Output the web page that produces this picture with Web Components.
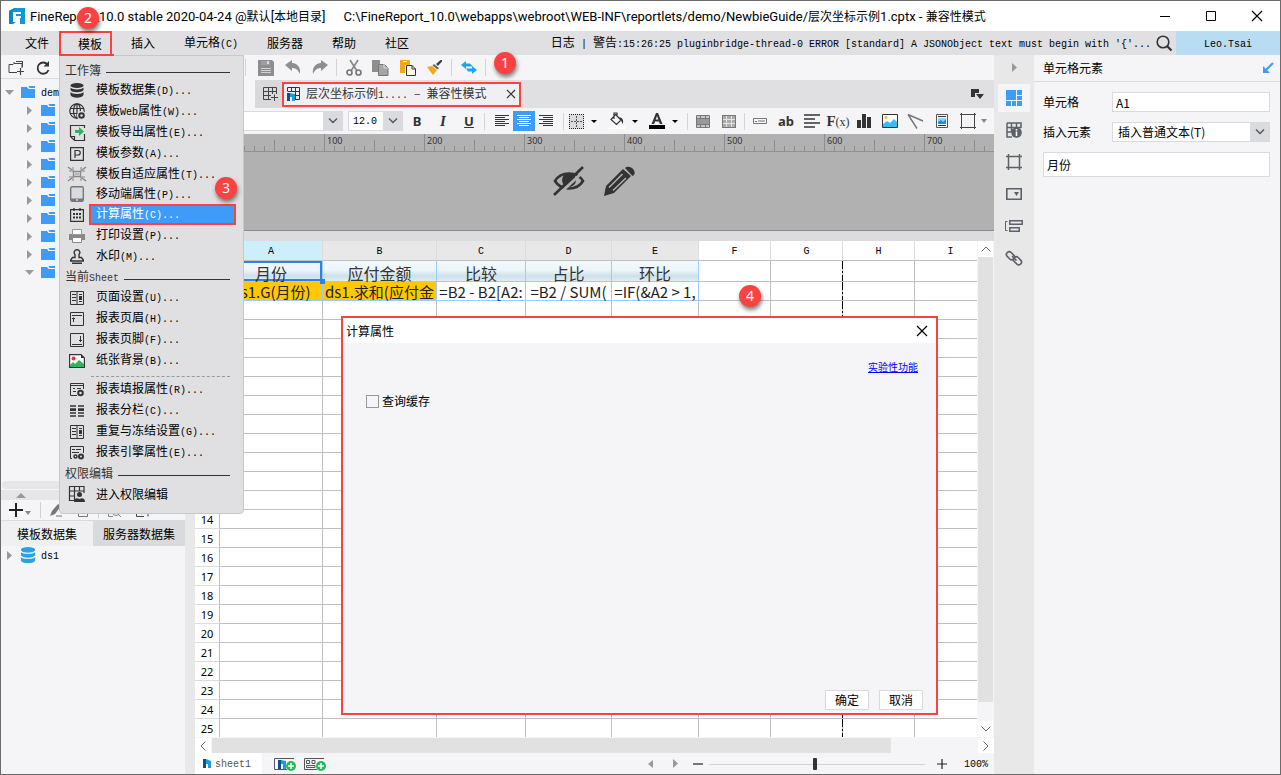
<!DOCTYPE html>
<html lang="zh-CN">
<head>
<meta charset="utf-8">
<title>FineReport</title>
<style>
  html, body {
    margin: 0;
    height: 100%;
  }

  body {
    font-family: "Noto Sans CJK SC", sans-serif;
    font-size: 12px;
    line-height: 16px;
    color: #000;
    overflow: hidden;
  }
</style>
</head>
<body>
<report-designer></report-designer>

<script>
// name: [width, height, svg content]
const ICONS = {
  logo: [16, 16, '<path d="M0 3 5 0H16V16H11V10H7V14L4 16H0Z" fill="#1296db"/><path d="M4 4H12V6H7V8H12V10H7V14H4Z" fill="#fff"/><path d="M0 3 4 1V16H0Z" fill="#0f86cf"/>'],
  miniLogo: [8, 9, '<path d="M0 0H3V9H0Z" fill="#0b4f8f"/><path d="M3 0 8 2V9H5V5H3Z" fill="#1e9be0"/>'],
  minimize: [10, 10, '<path d="M0 5.500H10" stroke="#000"/>'],
  maximize: [10, 10, '<path d="M.5.5H9.500V9.500H.5Z" stroke="#000" fill="none"/>'],
  close: [10, 10, '<path d="M0 0 10 10M10 0 0 10" stroke="#000" stroke-width="1.200"/>'],
  closeTab: [8, 8, '<path d="M0 0 8 8M8 0 0 8" stroke="#333" stroke-width="1.200"/>'],
  search: [16, 16, '<circle cx="7" cy="7" r="5.800" fill="none" stroke="#333" stroke-width="1.600"/><path d="M11 11 15.500 15.500" stroke="#333" stroke-width="2.200"/>'],
  newFolder: [16, 14, '<path d="M9 11.500H1V3.500H5L6 2.500H14V7M6 2.500V1M8 .5H15M14.500.5V6" fill="none" stroke="#444"/><path d="M12.500 7V14M9 10.500H16" stroke="#444" stroke-width="1.200"/>'],
  refresh: [14, 14, '<path d="M11.500 3.500A5.600 5.600 0 1 0 12.500 9" fill="none" stroke="#333" stroke-width="1.800"/><path d="M13 0V5.500H7.500Z" fill="#333"/>'],
  save: [16, 16, '<path d="M0 0H14L16 2V16H0Z" fill="#8e8e8e"/><path d="M3 1H12V5H3Z" fill="#a0a0a0"/><path d="M9 1H11V4H9Z" fill="#d8d8da"/><path d="M3 8.500H13M3 10.500H13M3 12.500H13" stroke="#d0d0d2"/>'],
  undo: [16, 15, '<path d="M0 5 7 0V3C12 3 16 7 15 14 13 10 11 8 7 8V11Z" fill="#8e8e8e"/>'],
  redo: [16, 15, '<path d="M16 5 9 0V3C4 3 0 7 1 14 3 10 5 8 9 8V11Z" fill="#8e8e8e"/>'],
  cut: [16, 16, '<path d="M4 0 11 11M12 0 5 11" stroke="#888" stroke-width="1.700"/><circle cx="3.500" cy="12.500" r="2.500" fill="none" stroke="#777" stroke-width="1.700"/><circle cx="12.500" cy="12.500" r="2.500" fill="none" stroke="#777" stroke-width="1.700"/>'],
  copy: [17, 16, '<path d="M0 0H8V12H0Z" fill="#8e8e8e"/><path d="M6.500 4.500H12.500L16 8V15.500H6.500Z" fill="#a5a5a5" stroke="#777"/><path d="M12 4V8H16" fill="none" stroke="#ddd"/>'],
  paste: [16, 16, '<path d="M0 0H10V5H5V13H0Z" fill="#f0a818"/><path d="M3 1H7V2H3Z" fill="#fff"/><path d="M6.500 5.500H12L15.500 9V15.500H6.500Z" fill="#fff8ea" stroke="#333"/><path d="M12 5.500V9H15.500" fill="none" stroke="#333"/>'],
  brush: [16, 15, '<path d="M9 4 13.500 0H15V1.500L11 6Z" fill="#444"/><path d="M7 4 12 8 10.500 9.500 5.500 5.500Z" fill="#666"/><path d="M0 7 5 6 10 10 6 15Z" fill="#f0a818"/>'],
  swap: [16, 13, '<path d="M0 4 5 0V2.500H9L12 5.500H5V8Z" fill="#1fa5e8"/><path d="M16 9 11 5V7.500H5L7 10.500H11V13Z" fill="#1fa5e8"/>'],
  newTab: [15, 14, '<path d="M13.500 7V.5H.5V12.500H8M.5 4.500H13.500M.5 8.500H8M5.500.5V12.500M9.500.5V7" fill="none" stroke="#444"/><path d="M11.500 7.500V14M8 10.500H15" stroke="#444"/>'],
  report: [13, 14, '<path d="M.5 4V.5H12.500V12.500H8M.5 4.500H12.500M8 8.500H12.500M4.500.5V4M8.500.5V12" fill="none" stroke="#333"/><path d="M0 6H3V14H0Z" fill="#0b4f8f"/><path d="M3 6 8 7V14H5V10H3Z" fill="#1e9be0"/>'],
  tabList: [13, 10, '<path d="M0 0H8V4H4V8H0Z" fill="#333"/><path d="M5 5H13L9 10Z" fill="#333"/>'],
  chevron: [10, 6, '<path d="M1 .5 5 4.500 9 .5" fill="none" stroke="#555" stroke-width="1.400"/>'],
  up: [10, 6, '<path d="M.5 5.500 5 1 9.500 5.500" fill="none" stroke="#666"/>'],
  down: [10, 6, '<path d="M.5.5 5 5 9.500.5" fill="none" stroke="#666"/>'],
  left: [6, 10, '<path d="M5.500.5 1 5 5.500 9.500" fill="none" stroke="#666"/>'],
  right: [6, 10, '<path d="M.5.5 5 5 .5 9.500" fill="none" stroke="#666"/>'],
  caret: [6, 3, '<path d="M0 0H6L3 3Z" fill="#000"/>'],
  caretGray: [6, 4, '<path d="M0 0H6L3 4Z" fill="#888"/>'],
  triRight: [5, 9, '<path d="M0 0 5 4.500 0 9Z" fill="#999"/>'],
  triLeft: [5, 8, '<path d="M5 0 0 4 5 8Z" fill="#999"/>'],
  triDown: [9, 5, '<path d="M0 0H9L4.500 5Z" fill="#999"/>'],
  triUp: [10, 5, '<path d="M0 5H10L5 0Z" fill="#999"/>'],
  folder: [14, 12, '<path d="M0 1H6L7.500 3H14V12H0Z" fill="#409bf7"/><path d="M7.500 0H14V2H8.500Z" fill="#409bf7"/>'],
  alignLeft: [14, 12, '<path d="M0 .5H14M0 2.500H10M0 4.500H14M0 6.500H10M0 8.500H14M0 10.500H10" stroke="#333"/>'],
  alignCenter: [15, 12, '<path d="M0 .5H14M2 2.500H12M0 4.500H14M2 6.500H12M0 8.500H14M2 10.500H12" stroke="#fff"/>'],
  alignRight: [14, 12, '<path d="M0 .5H14M4 2.500H14M0 4.500H14M4 6.500H14M0 8.500H14M4 10.500H14" stroke="#333"/>'],
  border: [15, 15, '<path d="M0 0H15V15H0Z" fill="#dcdcdf"/><path d="M0 .5H15M0 14.500H15M.5 0V15M14.500 0V15" stroke="#222" stroke-dasharray="1 1"/><path d="M2 7.500H14M7.500 2V14" stroke="#555" stroke-dasharray="2 1"/>'],
  bucket: [16, 16, '<path d="M6.500 1.500 12 7 7.500 11.500 2 6.500ZM5 6V0H8V4" fill="none" stroke="#333" stroke-width="1.200"/><path d="M10 4C14 5 15 8 13.500 11L12 7Z" fill="#333"/><path d="M0 13H16V16H0Z" fill="#fff"/>'],
  fontColor: [16, 16, '<path d="M2.500 11 7 0H9L13.500 11H10.800L10 8.500H6L5.200 11ZM6.700 6.500H9.300L8 3Z" fill="#333" fill-rule="evenodd"/><path d="M0 12H16V16H0Z" fill="#000"/>'],
  merge: [14, 13, '<path d="M.5.5H13.500V12.500H.5Z" fill="#c6c6c8" stroke="#777"/><path d="M0 3.500H14M0 9.500H14M4.500.5V3M9.500.5V3M4.500 10V13M9.500 10V13" stroke="#777"/><path d="M1 4H13V9H1Z" fill="#999"/>'],
  unmerge: [14, 13, '<path d="M.5.5H13.500V12.500H.5Z" fill="#aaa" stroke="#777"/><path d="M0 4.500H14M0 8.500H14M4.500 0V13M9.500 0V13" stroke="#e4e4e4"/><path d="M.5.5H13.500V12.500H.5Z" fill="none" stroke="#777"/>'],
  textBox: [14, 6, '<path d="M.5.5H13.500V5.500H.5Z" fill="none" stroke="#777"/><path d="M2 3.500H4M5 3H12" stroke="#777"/>'],
  lines: [16, 14, '<path d="M0 1H16M0 5H11M0 9H16M0 13H11" stroke="#333" stroke-width="1.600"/>'],
  chart: [14, 14, '<path d="M0 6H4V14H0ZM5 0H9V14H5ZM10 3H14V14H10Z" fill="#333"/>'],
  image: [16, 14, '<path d="M.5.5H15.500V13.500H.5Z" fill="#fff" stroke="#333"/><path d="M1 10 5 7 8 9 12 5 15 8V13H1Z" fill="#38bdf8"/><circle cx="4" cy="3.500" r="1.500" fill="#f5b830"/>'],
  slope: [16, 15, '<path d="M0 .5 15 7M0 .5 9 14.500" stroke="#777" stroke-width="1.400" fill="none"/>'],
  docImage: [12, 14, '<path d="M.5.5H11.500V13.500H.5Z" fill="#fff" stroke="#555"/><path d="M2 2.500H10M2 11.500H10" stroke="#333"/><path d="M2 4H10V10H2Z" fill="#1a8fe0"/><path d="M2 8 5 6 7 8 10 5V4H2Z" fill="#8fd0fa"/>'],
  frame: [16, 16, '<path d="M1.500 0V16M14.500 0V16M0 1.500H16M0 14.500H16" stroke="#444" fill="none"/>'],
  frameBold: [16, 16, '<path d="M2.500 0V16M13.500 0V16M0 2.500H16M0 13.500H16" stroke="#5b6069" stroke-width="1.500" fill="none"/>'],
  tiles: [16, 16, '<path d="M0 0H10V10H0ZM11 0H16V5H11ZM11 6H16V10H11ZM0 11H5V16H0ZM6 11H10V16H6ZM11 11H16V16H11Z" fill="#409bf7"/>'],
  tableInfo: [16, 16, '<path d="M1 1H15V6M1 1V15H6M1 5.500H15M1 10H5M5.500 1V10M10.500 1V5" fill="none" stroke="#5b6069" stroke-width="1.500"/><circle cx="10.500" cy="10.500" r="5.300" fill="#5b6069"/><path d="M10.500 7V8.500M10.500 9.500V14" stroke="#fff" stroke-width="1.600"/>'],
  widget: [16, 12, '<path d="M.8.8H15.200V11.200H.8Z" fill="none" stroke="#5b6069" stroke-width="1.600"/><path d="M8 4H13L10.500 8Z" fill="#5b6069"/>'],
  layers: [18, 12, '<path d="M2.500 1.500H.5V10.500H2.500" fill="none" stroke="#5b6069"/><path d="M4.800.8H17.200V4.200H4.800ZM4.800 7.800H14.200V11.200H4.800Z" fill="none" stroke="#5b6069" stroke-width="1.500"/>'],
  link: [16, 16, '<g fill="none" stroke="#5b6069" stroke-width="1.600"><rect x="0" y="3" width="9" height="5.500" rx="2.700" transform="rotate(45 4.500 5.700)"/><rect x="7" y="8" width="9" height="5.500" rx="2.700" transform="rotate(45 11.500 10.700)"/><path d="M6 6 10.500 10.500"/></g>'],
  popIn: [12, 12, '<path d="M11 1 4 8" stroke="#409bf7" stroke-width="2"/><path d="M1 4V11H8Z" fill="#409bf7"/>'],
  eyeOff: [32, 30, '<path d="M2 15C8 5 24 5 30 15 24 25 8 25 2 15Z" fill="none" stroke="#333" stroke-width="2.600"/><circle cx="16" cy="14" r="7" fill="#333"/><path d="M3 31 33 3" stroke="#b1b1b1" stroke-width="3"/><path d="M1 29 30 1" stroke="#333" stroke-width="2.600"/>'],
  pencil: [32, 30, '<path d="M0 30 2 20 19 3 27 10 10 27Z" fill="#333"/><path d="M21 2C25-2 33 4 30 9L28.500 10Z" fill="#333"/><path d="M5 21.500 18.500 8M9 24.500 22 12" stroke="#b1b1b1" stroke-width="1.500"/>'],
  plus: [14, 14, '<path d="M7 0V14M0 7H14" stroke="#222" stroke-width="2"/>'],
  plusThin: [10, 10, '<path d="M5 0V10M0 5H10" stroke="#222" stroke-width="1.200"/>'],
  minusThin: [10, 10, '<path d="M0 5H10" stroke="#222" stroke-width="1.200"/>'],
  edit: [13, 14, '<path d="M0 13 2 8 8 1 11 3 5 11Z" fill="#777"/><path d="M6 13H12" stroke="#777"/>'],
  trash: [12, 14, '<path d="M1.500 3V13.500H10.500V3M0 2.500H12" fill="none" stroke="#777"/>'],
  preview: [14, 14, '<path d="M.5.500H12.500M.5 0V13.500H5" fill="none" stroke="#888"/><circle cx="8" cy="9" r="3.500" fill="none" stroke="#888"/><path d="M10 11 13 14" stroke="#888"/>'],
  tools: [15, 14, '<path d="M.5 0V13.500H8M12 4V13.500" fill="none" stroke="#444"/><path d="M5 11 8 6 11 9" fill="none" stroke="#444" stroke-width="1.500"/>'],
  dbBlue: [14, 16, '<path d="M0 2.500V13.500C0 17 14 17 14 13.500V2.500Z" fill="#27a3e2"/><ellipse cx="7" cy="2.700" rx="7" ry="2.700" fill="#27a3e2"/><path d="M0 4C1 7 13 7 14 4M0 9C1 12 13 12 14 9" fill="none" stroke="#fff" stroke-width="1.200"/>'],
  db: [14, 15, '<ellipse cx="7" cy="2.500" rx="6.500" ry="2.500" fill="#333"/><path d="M.5 4.500C2 7 12 7 13.500 4.500V7C12 10 2 10 .5 7ZM.5 9C2 11.500 12 11.500 13.500 9V12C12 15.500 2 15.500.5 12Z" fill="#333"/>'],
  globe: [17, 17, '<g fill="none" stroke="#333" stroke-width="1.200"><circle cx="8" cy="8" r="7.200"/><ellipse cx="8" cy="8" rx="3.500" ry="7.200"/><path d="M1 5.500H15M1 10.500H9M8 1V15"/></g><circle cx="12.500" cy="12.500" r="4.500" fill="#e0e0e3"/><circle cx="12.500" cy="12.500" r="2.300" fill="none" stroke="#333" stroke-width="2"/>'],
  exportDoc: [15, 16, '<path d="M14.500 9V15.500H4.500L.5 11.500V.5H14.500V3M.5 11.500H4.500V15.500" fill="none" stroke="#333" stroke-width="1.200"/><path d="M5 5H9V2L14 6.500 9 11V8H5Z" fill="#2fb457"/>'],
  param: [14, 14, '<path d="M.6.6H13.400V13.400H.6Z" fill="none" stroke="#333" stroke-width="1.200"/><path d="M5 11V3.500H8A2 2 0 0 1 8 8H5" fill="none" stroke="#333" stroke-width="1.200"/>'],
  adaptive: [18, 14, '<path d="M5.500 4.500H12.500V9.500H5.500Z" fill="none" stroke="#888" stroke-width="1.400"/><path d="M7 7H11" stroke="#888"/><path d="M0 0 4 3M18 0 14 3M0 14 4 11M18 14 14 11" stroke="#888" stroke-width="1.500"/><path d="M1 4H5V0M17 4H13V0M1 10H5V14M17 10H13V14" fill="none" stroke="#888"/>'],
  mobile: [14, 16, '<rect x=".7" y=".7" width="12.600" height="14.600" rx="1.500" fill="#d5dbe1" stroke="#777" stroke-width="1.400"/><path d="M1 12.500H13V15H1Z" fill="#777"/><path d="M6 14H8" stroke="#fff"/>'],
  calendar: [14, 14, '<path d="M.6 1.600H13.400V13.400H.6Z" fill="none" stroke="#333" stroke-width="1.200"/><path d="M4 0V3M10 0V3" stroke="#333" stroke-width="1.400"/><path d="M3 6H11M3 9.500H11" stroke="#333" stroke-width="2" stroke-dasharray="2 1"/>'],
  printer: [16, 14, '<path d="M0 5H16V11H0Z" fill="#888"/><path d="M3.500.5H12.500V5.500H3.500Z" fill="#fff" stroke="#999"/><path d="M3.500 8.500H12.500V13.500H3.500Z" fill="#fff" stroke="#888"/>'],
  stamp: [14, 15, '<path d="M7 .7A2.800 2.800 0 0 1 9 5.500L9 8.500H11.500L13.300 11V12H.7V11L2.500 8.500H5V5.500A2.800 2.800 0 0 1 7 .7ZM2 14.300H12" fill="none" stroke="#333" stroke-width="1.400"/>'],
  page: [14, 14, '<path d="M.5.5H13.500V13.500H.5ZM7 .5V13.500M2 3.500H6M2 6.500H6M2 9.500H6M9 3.500H12M9 10.500H12" fill="none" stroke="#333"/><path d="M9 5H12V9H9Z" fill="#333"/>'],
  header: [14, 14, '<path d="M.5.5H13.500V13.500H.5ZM2 3.500H12M3.500 5.500V10M2 6.500H5" fill="none" stroke="#333"/>'],
  footer: [14, 14, '<path d="M.5.5H13.500V13.500H.5ZM2 11.500H12M10.500 3V9M9 7.500H12" fill="none" stroke="#333"/>'],
  paper: [16, 14, '<path d="M.6.6H12L15.400 4V13.400H.6Z" fill="#fff" stroke="#333" stroke-width="1.200"/><path d="M1 13V11L4 8 6 10 10 6 15 10V13Z" fill="#2fb457"/><circle cx="4.500" cy="4.500" r="2" fill="#e33"/><path d="M12 .6V4H15.400Z" fill="#333"/>'],
  fill: [15, 14, '<path d="M13.500 6V.5H.5V12.500H7M.5 2.500H13.500M3 5.500H5M7 5.500H11M3 8.500H6" fill="none" stroke="#333"/><circle cx="10.500" cy="10" r="2.300" fill="none" stroke="#333" stroke-width="2"/>'],
  columns: [14, 12, '<path d="M0 1H6M0 4H6M0 8H6M0 11H6M8 1H14M8 4H14M8 8H14M8 11H14" stroke="#333" stroke-width="1.300"/><path d="M0 4H6V6H0ZM8 4H14V6H8Z" fill="#333"/>'],
  engine: [15, 14, '<path d="M13.500 7V.5H.5V12.500H2M2 3.500H5M6 3.500H11M2 6.500H9" fill="none" stroke="#333"/><circle cx="5.500" cy="10.500" r="1.500" fill="none" stroke="#333" stroke-width="1.500"/><circle cx="11" cy="10.500" r="2" fill="none" stroke="#333" stroke-width="2"/>'],
  auth: [16, 16, '<path d="M15 7V.5H.5V14.500H5M.5 5H15M.5 10H6M5.500.5V15M10.500.5V5" fill="none" stroke="#333" stroke-width="1.200"/><circle cx="10.500" cy="8.500" r="2.500" fill="#333"/><path d="M5 16C5 12 8 11.500 10.500 13 13 11.500 16 12 16 16Z" fill="#333"/>'],
  addSheet: [22, 14, '<path d="M20 1.500H.5V12.500H13" fill="none" stroke="#555"/><path d="M4 3H7V12H4Z" fill="#0b4f8f"/><path d="M7 3 12 4V12H9V7H7Z" fill="#1e9be0"/><circle cx="17" cy="9" r="5" fill="#1fbf55"/><path d="M17 6V12M14 9H20" stroke="#fff" stroke-width="1.500"/>'],
  addForm: [22, 14, '<path d="M20 1.500H.5V12.500H13M2.500 3.500H5.500V6.500H2.500ZM8 3.500H11V6.500H8ZM2.500 8.500H11V10.500H2.500Z" fill="none" stroke="#555"/><circle cx="17" cy="9" r="5" fill="#1fbf55"/><path d="M17 6V12M14 9H20" stroke="#fff" stroke-width="1.500"/>']
};

// latin runs are set in a smaller monospace so that two letters take one ideograph
function mix(text) {
  return text.replace(/[\x20-\x7e]+/g, '<span class="lat">$&</span>');
}

function icon(name) {
  return `<fr-icon name="${name}"></fr-icon>`;
}

const BASE = /*css*/`
  * {
    box-sizing: border-box;
  }

  button, input, select {
    margin: 0;
    font: inherit;
    color: inherit;
  }

  button {
    display: flex;
    align-items: center;
    justify-content: center;
    padding: 0;
    border: 0;
    background: none;
    white-space: nowrap;
  }

  .lat {
    font-family: "Liberation Mono", monospace;
    font-size: 10px;
    white-space: pre;
  }
`;

class FrIcon extends HTMLElement {

  constructor() {
    super();
    this.attachShadow({ mode: 'open' });
  }

  connectedCallback() {
    const [w, h, body] = ICONS[this.getAttribute('name')];
    this.shadowRoot.innerHTML = /*html*/`
      <style>
        :host { display: inline-flex; flex: none; }
        svg { display: block; overflow: visible; }
      </style>
      <svg width="${w}" height="${h}" viewBox="0 0 ${w} ${h}" aria-hidden="true">${body}</svg>
    `;
  }

}

customElements.define('fr-icon', FrIcon);

// common part of all the panels
class FrPanel extends HTMLElement {

  constructor() {
    super();
    this.attachShadow({ mode: 'open' });
  }

  connectedCallback() {
    this.shadowRoot.innerHTML = `<style>${BASE}${this.constructor.styles}</style>${this.markup()}`;
  }

}

class StepBadge extends FrPanel {

  static get styles() {
    return /*css*/`
      :host {
        display: flex;
        align-items: center;
        justify-content: center;
        width: 22px;
        height: 22px;
        border-radius: 50%;
        background: #fa4242;
        box-shadow: 1px 3px 4px rgba(0, 0, 0, .5);
        color: #fff;
        font: 14px/22px "Noto Sans", sans-serif;
      }
    `;
  }

  markup() {
    return '<slot></slot>';
  }

}

customElements.define('step-badge', StepBadge);

class TitleBar extends FrPanel {

  static get styles() {
    return /*css*/`
      :host {
        display: flex;
        align-items: center;
        height: 30px;
        flex: none;
        padding: 0 18px 0 8px;
        background: #fff;
      }

      .name {
        margin: 0 18px 0 5px;
      }

      .lat {
        font-family: Roboto, sans-serif;
        font-size: 13px;
      }

      .buttons {
        display: flex;
        gap: 36px;
        margin-left: auto;
      }
    `;
  }

  markup() {
    return /*html*/`
      ${icon('logo')}
      <span class="name">${mix('FineReport_10.0 stable 2020-04-24 @默认[本地目录]')}</span>
      <span>${mix('C:\\FineReport_10.0\\webapps\\webroot\\WEB-INF\\reportlets/demo/NewbieGuide/层次坐标示例1.cptx - 兼容性模式')}</span>
      <div class="buttons">
        <button aria-label="最小化">${icon('minimize')}</button>
        <button aria-label="最大化">${icon('maximize')}</button>
        <button aria-label="关闭">${icon('close')}</button>
      </div>
    `;
  }

}

customElements.define('title-bar', TitleBar);

class MenuBar extends FrPanel {

  static get styles() {
    return /*css*/`
      :host {
        display: flex;
        align-items: stretch;
        height: 24px;
        flex: none;
        background: #e0e0e3;
      }

      nav {
        display: flex;
        padding-left: 5px;
      }

      nav button {
        padding: 0 10px 0 19px;
      }

      nav .open {
        border: solid #fa4242;
        border-width: 2px 2px 0;
        padding: 0 8px 0 17px;
      }

      .log {
        margin-left: auto;
        align-self: center;
        white-space: nowrap;
      }

      .search {
        width: 25px;
      }

      .user {
        width: 104px;
        background: #b8dcf2;
      }
    `;
  }

  markup() {
    const items = ['文件', '模板', '插入', '单元格(C)', '服务器', '帮助', '社区'];
    return /*html*/`
      <nav>${items.map(t => `<button${t === '模板' ? ' class="open"' : ''}><span>${mix(t)}</span></button>`).join('')}</nav>
      <span class="log">${mix("日志 | 警告:15:26:25 pluginbridge-thread-0 ERROR [standard] A JSONObject text must begin with '{'...")}</span>
      <button class="search" aria-label="搜索">${icon('search')}</button>
      <button class="user"><span>${mix('Leo.Tsai')}</span></button>
    `;
  }

}

customElements.define('menu-bar', MenuBar);

class TemplateMenu extends FrPanel {

  static get styles() {
    return /*css*/`
      :host {
        display: block;
        width: 185px;
        padding: 4px 7px 9px 5px;
        background: #e0e0e3;
        border: 1px solid #c8c8cb;
        border-radius: 0 0 4px 4px;
      }

      .title {
        display: flex;
        align-items: center;
        gap: 5px;
        height: 20px;
        padding-right: 6px;
        color: #333;
      }

      .title::after {
        content: "";
        flex: 1;
        height: 1px;
        margin-top: 4px;
        background: #333;
      }

      button {
        width: 100%;
        height: 21px;
        justify-content: flex-start;
      }

      button.low {
        height: 20px;
      }

      .pic {
        display: flex;
        justify-content: center;
        width: 24px;
        flex: none;
      }

      .text {
        flex: 1;
        display: flex;
        align-items: center;
        align-self: stretch;
        padding-left: 7px;
      }

      .on .text {
        background: #409bf7;
        color: #fff;
        border: 2px solid #fa4242;
        padding-left: 5px;
      }

      hr {
        height: 1px;
        margin: 5px 6px 2px 26px;
        border: 0;
        border-top: 1px dashed #999;
      }
    `;
  }

  markup() {
    const item = (name, text, cls = '') => `
      <button class="${cls}"><span class="pic">${icon(name)}</span><span class="text"><span>${mix(text)}</span></span></button>`;
    return /*html*/`
      <div class="title"><span>工作簿</span></div>
      ${item('db', '模板数据集(D)...')}
      ${item('globe', '模板Web属性(W)...')}
      ${item('exportDoc', '模板导出属性(E)...')}
      ${item('param', '模板参数(A)...')}
      ${item('adaptive', '模板自适应属性(T)...', 'low')}
      ${item('mobile', '移动端属性(P)...', 'low')}
      ${item('calendar', '计算属性(C)...', 'on')}
      ${item('printer', '打印设置(P)...')}
      ${item('stamp', '水印(M)...')}
      <div class="title"><span>${mix('当前Sheet')}</span></div>
      ${item('page', '页面设置(U)...')}
      ${item('header', '报表页眉(H)...')}
      ${item('footer', '报表页脚(F)...')}
      ${item('paper', '纸张背景(B)...')}
      <hr>
      ${item('fill', '报表填报属性(R)...')}
      ${item('columns', '报表分栏(C)...')}
      ${item('page', '重复与冻结设置(G)...')}
      ${item('engine', '报表引擎属性(E)...')}
      <div class="title"><span>权限编辑</span></div>
      ${item('auth', '进入权限编辑')}
    `;
  }

}

customElements.define('template-menu', TemplateMenu);

class FilePanel extends FrPanel {

  static get styles() {
    return /*css*/`
      :host {
        display: flex;
        flex-direction: column;
        width: 184px;
        flex: none;
        background: #f5f5f8;
      }

      .bar {
        display: flex;
        align-items: center;
        gap: 12px;
        height: 24px;
        flex: none;
        padding: 2px 7px 0;
        border-bottom: 1px solid #dadade;
      }

      .tree {
        height: 402px;
        flex: none;
        padding-top: 4px;
      }

      .row {
        display: flex;
        align-items: center;
        height: 18px;
        padding-left: 4px;
      }

      .row .arrow {
        display: flex;
        justify-content: center;
        width: 9px;
        margin-right: 7px;
      }

      .row .label {
        margin-left: 6px;
      }

      .sub {
        padding-left: 24px;
      }

      .scroll {
        height: 8px;
        flex: none;
        margin-left: 1px;
        border-radius: 4px;
        background: #e6e6e6;
      }

      .fold {
        display: flex;
        align-items: center;
        height: 10px;
        flex: none;
        margin-top: 1px;
        padding-left: 15px;
        background: #e6e6e8;
      }

      .tools {
        gap: 0;
        height: 21px;
        padding: 0 8px;
      }

      .tools i {
        width: 1px;
        height: 16px;
        margin: 0 9px;
        background: #d0d0d4;
      }

      .tools .more {
        margin: 0 0 0 2px;
      }

      .tools .wide {
        margin-left: 14px;
      }

      .tabs {
        display: flex;
        height: 25px;
        flex: none;
      }

      .tabs button {
        flex: 1;
        background: #d9dadd;
      }

      .tabs .on {
        background: #f0f0f3;
      }
    `;
  }

  markup() {
    const sub = name => `<div class="row sub"><span class="arrow">${icon(name)}</span>${icon('folder')}</div>`;
    return /*html*/`
      <div class="bar">
        <button aria-label="新建文件夹">${icon('newFolder')}</button>
        <button aria-label="刷新">${icon('refresh')}</button>
      </div>
      <div class="tree">
        <div class="row"><span class="arrow">${icon('triDown')}</span>${icon('folder')}<span class="label">${mix('demo')}</span></div>
        ${sub('triRight').repeat(9)}
        ${sub('triDown')}
      </div>
      <div class="scroll"></div>
      <div class="fold">${icon('triUp')}</div>
      <div class="bar tools">
        <button aria-label="添加">${icon('plus')}</button>
        <span class="more">${icon('caretGray')}</span>
        <i></i>
        <button aria-label="编辑">${icon('edit')}</button>
        <button class="wide" aria-label="删除">${icon('trash')}</button>
        <i></i>
        <button aria-label="预览">${icon('preview')}</button>
        <button class="wide" aria-label="设置">${icon('tools')}</button>
      </div>
      <div class="tabs">
        <button class="on">模板数据集</button>
        <button>服务器数据集</button>
      </div>
      <div class="row"><span class="arrow">${icon('triRight')}</span>${icon('dbBlue')}<span class="label">${mix('ds1')}</span></div>
    `;
  }

}

customElements.define('file-panel', FilePanel);

class ToolBars extends FrPanel {

  static get styles() {
    return /*css*/`
      :host {
        display: block;
        flex: none;
        background: #f5f5f8;
      }

      .main, .files, .format {
        display: flex;
        align-items: center;
      }

      .main {
        height: 25px;
        padding-left: 47px;
      }

      .main button {
        width: 27px;
      }

      i {
        width: 1px;
        height: 17px;
        flex: none;
        margin: 0 3px;
        background: #d4d4d8;
      }

      .main .first {
        margin-right: 6px;
      }

      .files {
        height: 28px;
        padding-left: 60px;
      }

      .strip {
        flex: 1;
        display: flex;
        align-items: center;
        height: 28px;
        padding-right: 10px;
        background: #e0e0e3;
      }

      .strip .new {
        width: 27px;
        height: 28px;
        padding-left: 3px;
        background: #d9d9dc;
      }

      .tab {
        display: flex;
        align-items: center;
        width: 239px;
        height: 25px;
        padding: 0 4px 0 3px;
        border: 2px solid #fa4242;
        background: #f0f0f3;
        color: #333;
        white-space: nowrap;
      }

      .tab .text {
        margin-left: 6px;
      }

      .tab button {
        margin-left: auto;
      }

      .strip > :last-child {
        margin-left: auto;
      }

      .format {
        height: 26px;
        padding-left: 24px;
      }

      .combo {
        display: flex;
        height: 20px;
        border: 1px solid #dadade;
        background: #fff;
      }

      .combo input {
        width: 34px;
        border: 0;
        padding: 0 4px;
        background: none;
        font: 10px "Liberation Mono", monospace;
      }

      .combo.font input {
        width: 103px;
      }

      .combo button {
        width: 19px;
        background: #dadbde;
      }

      .size {
        margin: 0 1px 0 5px;
      }

      .format .tool {
        width: 26px;
        height: 22px;
        flex: none;
        color: #333;
      }

      .format > i {
        margin: 0 2px;
      }

      .format .letter {
        font: bold 13px "Noto Sans", sans-serif;
      }

      .format .serif {
        font: bold 15px "Liberation Serif", serif;
      }

      .serif small {
        font-size: 12px;
        font-weight: normal;
      }

      .aligns {
        display: flex;
        margin: 0 4px;
      }

      .aligns button {
        width: 22px;
        height: 20px;
      }

      .aligns .on {
        background: #409bf7;
      }

      .drops {
        display: flex;
        gap: 8px;
        margin-right: 7px;
      }

      .drops button {
        width: 32px;
        justify-content: flex-start;
        gap: 7px;
        padding-left: 3px;
      }
    `;
  }

  markup() {
    const tool = name => `<button class="tool" aria-label="${name}">${icon(name)}</button>`;
    return /*html*/`
      <div class="main">
        <i class="first"></i>
        ${['save', 'undo', 'redo'].map(tool).join('')}<i></i>
        ${['cut', 'copy', 'paste', 'brush'].map(tool).join('')}<i></i>
        ${tool('swap')}<i></i>
      </div>
      <div class="files">
        <div class="strip">
          <button class="new" aria-label="新建">${icon('newTab')}</button>
          <div class="tab">
            ${icon('report')}
            <span class="text">${mix('层次坐标示例1.... – 兼容性模式')}</span>
            <button aria-label="关闭">${icon('closeTab')}</button>
          </div>
          <button aria-label="列表">${icon('tabList')}</button>
        </div>
      </div>
      <div class="format">
        <div class="combo font"><input aria-label="字体"><button aria-label="选择字体">${icon('chevron')}</button></div>
        <div class="combo size"><input aria-label="字号" value="12.0"><button aria-label="选择字号">${icon('chevron')}</button></div>
        <button class="tool letter">B</button>
        <button class="tool serif"><em>I</em></button>
        <button class="tool letter"><u>U</u></button>
        <i></i>
        <div class="aligns">
          <button aria-label="左对齐">${icon('alignLeft')}</button>
          <button aria-label="居中" class="on">${icon('alignCenter')}</button>
          <button aria-label="右对齐">${icon('alignRight')}</button>
        </div>
        <i></i>
        <div class="drops">
          <button aria-label="边框">${icon('border')}${icon('caret')}</button>
          <button aria-label="背景">${icon('bucket')}${icon('caret')}</button>
          <button aria-label="前景">${icon('fontColor')}${icon('caret')}</button>
        </div>
        <i></i>
        ${['merge', 'unmerge'].map(tool).join('')}
        <i></i>
        ${tool('textBox')}
        <button class="tool letter">ab</button>
        ${tool('lines')}
        <button class="tool serif"><span>F<small>(x)</small></span></button>
        ${['chart', 'image', 'slope', 'docImage', 'frame'].map(tool).join('')}
        ${icon('caretGray')}
      </div>
    `;
  }

}

customElements.define('tool-bars', ToolBars);

class ParamPane extends FrPanel {

  static get styles() {
    return /*css*/`
      :host {
        display: block;
        flex: none;
        background: #b1b1b1;
        border-bottom: 1px solid #8c8c8c;
      }

      .ruler {
        display: flex;
        height: 18px;
        padding-left: 29px;
        border-bottom: 1px solid #919191;
        overflow: hidden;
      }

      .ruler span {
        width: 100px;
        flex: none;
        padding-left: 3px;
        font: 9px/13px "Noto Sans", sans-serif;
        color: #333;
        background:
          linear-gradient(#8c8c8c, #8c8c8c) 0 0 / 1px 100% no-repeat,
          linear-gradient(#8c8c8c, #8c8c8c) 50px 100% / 1px 11px no-repeat,
          linear-gradient(90deg, #8c8c8c 1px, transparent 1px) 0 100% / 10px 5px repeat-x;
      }

      .pane {
        display: flex;
        justify-content: center;
        gap: 19px;
        height: 78px;
        padding-top: 14px;
        align-items: flex-start;
      }
    `;
  }

  markup() {
    return /*html*/`
      <div class="ruler">${[0, 100, 200, 300, 400, 500, 600, 700].map(n => `<span>${n}</span>`).join('')}</div>
      <div class="pane">
        <button aria-label="隐藏">${icon('eyeOff')}</button>
        <button aria-label="编辑">${icon('pencil')}</button>
      </div>
    `;
  }

}

customElements.define('param-pane', ParamPane);

class SheetGrid extends FrPanel {

  static get styles() {
    return /*css*/`
      :host {
        display: flex;
        flex-direction: column;
        flex: 1;
        min-height: 0;
        background: #f5f5f8;
      }

      .body {
        display: flex;
        flex: 1;
        min-height: 0;
      }

      .view {
        flex: 1;
        min-width: 0;
        overflow: hidden;
        background: #fff;
      }

      table {
        width: 792px;
        table-layout: fixed;
        border-collapse: separate;
        border-spacing: 0;
      }

      th, td {
        height: 19px;
        padding: 0;
        border: solid #bfbfbf;
        border-width: 0 1px 1px 0;
        white-space: nowrap;
        line-height: 17px;
        text-align: center;
      }

      th {
        font: 12px/17px "Liberation Mono", monospace;
        border-right-color: #dcdcdf;
      }

      tbody th {
        font-family: "Noto Sans", sans-serif;
        font-size: 11px;
        border-bottom-color: #dcdcdf;
        border-right-color: #bfbfbf;
      }

      thead th {
        height: 20px;
        padding-top: 2px;
      }

      .used {
        background: #e8e8e8;
      }

      .current {
        background: #cdeefb;
      }

      .head td, .head th {
        height: 21px;
      }

      .head .v {
        padding-top: 4px;
        font-size: 16px;
        line-height: 16px;
        color: #333;
        background: linear-gradient(#f3f9fd, #edf6fb 45%, #cde1ea 75%, #e0edf3);
        border-color: #99ccff;
      }

      .data .v {
        padding-top: 2px;
        font-size: 15px;
        line-height: 16px;
        color: #222;
        border-color: #99ccff;
      }

      .data .gold {
        background: #ffc800;
      }

      .head .select {
        position: relative;
        box-shadow: inset 0 2px #2f80e8, inset -2px 0 #2f80e8, inset 0 -2px #2f80e8;
      }

      .select::after {
        content: "";
        position: absolute;
        right: -3px;
        bottom: -3px;
        width: 5px;
        height: 5px;
        background: #2f80e8;
      }

      td:nth-child(8) {
        border-right: 0;
        background: repeating-linear-gradient(#000 0 8px, #bbb 8px 10px, #000 10px 12px, #bbb 12px 14px) 100% 0 / 1px 100% no-repeat;
      }

      .vbar, .hbar {
        display: flex;
        flex: none;
      }

      .vbar {
        flex-direction: column;
        width: 17px;
        padding: 0 1px;
      }

      .vbar button {
        height: 16px;
        background: #fff;
      }

      .vbar div {
        height: 445px;
        margin-bottom: auto;
        background: #e1e1e1;
      }

      .hbar {
        height: 16px;
        padding-top: 1px;
      }

      .hbar button {
        width: 16px;
        background: #fff;
      }

      .hbar div {
        flex: 1;
        margin: 0 87px 0 1px;
        background: #e1e1e1;
      }

      .foot {
        display: flex;
        align-items: center;
        height: 21px;
        flex: none;
        padding-right: 6px;
      }

      .sheet {
        gap: 4px;
        width: 67px;
        height: 21px;
        padding-right: 3px;
        background: #fff;
        color: #555;
        margin-right: 12px;
      }

      .foot .add {
        margin-right: 8px;
      }

      .pager {
        display: flex;
        gap: 20px;
        margin: 0 15px 0 auto;
      }

      input {
        width: 216px;
        height: 14px;
        margin: 0 12px 0 6px;
        appearance: none;
        background: linear-gradient(#d4d4d8, #d4d4d8) 0 7px / 100% 1px no-repeat;
      }

      input::-webkit-slider-thumb {
        appearance: none;
        width: 4px;
        height: 12px;
        border-radius: 1px;
        background: #333;
      }

      .zoom {
        margin-left: 17px;
      }
    `;
  }

  markup() {
    const cols = 'ABCDEFGHI'.split('');
    const widths = [25, 103, 114, 89, 86, 87, 72, 72, 72, 72];
    const values = {
      1: ['月份', '应付金额', '比较', '占比', '环比'],
      2: ['ds1.G(月份)', 'ds1.求和(应付金', '=B2 - B2[A2:', '=B2 / SUM(', '=IF(&amp;A2 &gt; 1,']
    };
    const cell = (row, i) => {
      const text = values[row] && values[row][i];
      if (!text) return '<td></td>';
      const cls = ['v'];
      if (row === 1 && i === 0) cls.push('select');
      if (row === 2 && i < 2) cls.push('gold');
      return `<td class="${cls.join(' ')}">${text}</td>`;
    };
    let rows = '';
    for (let r = 1; r <= 25; r++) {
      rows += `<tr class="${r === 1 ? 'head' : r === 2 ? 'data' : ''}"><th>${r}</th>${cols.map((c, i) => cell(r, i)).join('')}</tr>`;
    }
    return /*html*/`
      <div class="body">
        <div class="view">
          <table>
            <colgroup>${widths.map(w => `<col style="width:${w}px">`).join('')}</colgroup>
            <thead><tr><th></th>${cols.map((c, i) => `<th class="${i === 0 ? 'current' : i < 5 ? 'used' : ''}">${mix(c)}</th>`).join('')}</tr></thead>
            <tbody>${rows}</tbody>
          </table>
        </div>
        <div class="vbar">
          <button aria-label="向上">${icon('up')}</button>
          <div></div>
          <button aria-label="向下">${icon('down')}</button>
        </div>
      </div>
      <div class="hbar">
        <button aria-label="向左">${icon('left')}</button>
        <div></div>
        <button aria-label="向右">${icon('right')}</button>
      </div>
      <div class="foot">
        <button class="sheet">${icon('miniLogo')}<span>${mix('sheet1')}</span></button>
        <button class="add" aria-label="添加报表">${icon('addSheet')}</button>
        <button class="add" aria-label="添加表单">${icon('addForm')}</button>
        <div class="pager">
          <button aria-label="上一页">${icon('triLeft')}</button>
          <button aria-label="下一页">${icon('triRight')}</button>
        </div>
        <button aria-label="缩小">${icon('minusThin')}</button>
        <input type="range" min="0" max="100" value="49" aria-label="缩放">
        <button aria-label="放大">${icon('plusThin')}</button>
        <span class="zoom">${mix('100%')}</span>
      </div>
    `;
  }

}

customElements.define('sheet-grid', SheetGrid);

class SideStrip extends FrPanel {

  static get styles() {
    return /*css*/`
      :host {
        display: flex;
        flex-direction: column;
        align-items: center;
        gap: 4px;
        width: 40px;
        flex: none;
        background: #e8e8e8;
      }

      button {
        width: 32px;
        height: 28px;
      }

      .fold {
        height: 25px;
      }

      .on {
        background: #f5f5f8;
      }
    `;
  }

  markup() {
    return /*html*/`
      <button class="fold" aria-label="折叠">${icon('triRight')}</button>
      <button class="on" aria-label="单元格元素">${icon('tiles')}</button>
      ${['tableInfo', 'frameBold', 'widget', 'layers', 'link'].map(n => `<button aria-label="${n}">${icon(n)}</button>`).join('')}
    `;
  }

}

customElements.define('side-strip', SideStrip);

class CellPanel extends FrPanel {

  static get styles() {
    return /*css*/`
      :host {
        display: block;
        width: 246px;
        flex: none;
        background: #f5f5f8;
      }

      header {
        display: flex;
        align-items: center;
        justify-content: space-between;
        height: 27px;
        padding: 0 6px 0 9px;
        border-bottom: 1px solid #dadade;
      }

      form {
        display: flex;
        flex-direction: column;
        gap: 10px;
        padding: 10px 10px 10px 9px;
      }

      .line {
        display: flex;
        align-items: center;
      }

      label {
        width: 69px;
      }

      input, select {
        flex: 1;
        min-width: 0;
        height: 20px;
        padding: 0 3px;
        border: 1px solid #dadade;
        border-radius: 0;
        background: #fff;
      }

      .pick {
        display: flex;
        flex: 1;
        min-width: 0;
        background: #fff;
      }

      .pick span {
        display: flex;
        align-items: center;
        justify-content: center;
        width: 20px;
        background: #dadbde;
      }

      select {
        padding: 0 5px;
        border-right: 0;
        appearance: none;
      }

      .value {
        flex: none;
        height: 25px;
      }
    `;
  }

  markup() {
    return /*html*/`
      <header><span>单元格元素</span><button aria-label="弹出">${icon('popIn')}</button></header>
      <form>
        <div class="line"><label for="cell">单元格</label><input id="cell" value="A1"></div>
        <div class="line">
          <label for="kind">插入元素</label>
          <div class="pick"><select id="kind"><option>插入普通文本(T)</option></select><span>${icon('chevron')}</span></div>
        </div>
        <input class="value" aria-label="内容" value="月份">
      </form>
    `;
  }

}

customElements.define('cell-panel', CellPanel);

class FrDialog extends FrPanel {

  static get styles() {
    return /*css*/`
      :host {
        display: flex;
        flex-direction: column;
        border: 2px solid #fa4242;
        background: #f5f5f8;
      }

      header {
        display: flex;
        align-items: center;
        justify-content: space-between;
        height: 25px;
        padding: 0 9px 0 3px;
        background: #fff;
      }

      .content {
        flex: 1;
        padding: 16px 18px 0 23px;
      }

      footer {
        display: flex;
        justify-content: flex-end;
        gap: 10px;
        padding: 0 13px 3px;
      }

      footer button {
        width: 44px;
        height: 20px;
        border: 1px solid #dadade;
        background: #fff;
      }
    `;
  }

  markup() {
    return /*html*/`
      <header><span>${this.getAttribute('heading')}</span><button aria-label="关闭">${icon('close')}</button></header>
      <div class="content"><slot></slot></div>
      <footer><button>确定</button><button>取消</button></footer>
    `;
  }

}

customElements.define('fr-dialog', FrDialog);

class ReportDesigner extends FrPanel {

  static get styles() {
    return /*css*/`
      :host {
        position: relative;
        display: flex;
        flex-direction: column;
        box-sizing: border-box;
        height: 100vh;
        border: 1px solid #6b6b6b;
        background: #e8e8e8;
      }

      main {
        display: flex;
        flex: 1;
        min-height: 0;
      }

      .center {
        display: flex;
        flex-direction: column;
        flex: 1;
        min-width: 0;
        margin-left: 10px;
      }

      .gap {
        height: 10px;
        flex: none;
        background: #dcdcde;
      }

      /* windows and marks that float over the designer */
      template-menu, fr-dialog, step-badge, .mark {
        position: absolute;
      }

      template-menu {
        left: 58px;
        top: 54px;
      }

      .mark {
        left: 58px;
        top: 53px;
        width: 55px;
        height: 2px;
        background: #fa4242;
      }

      fr-dialog {
        left: 340px;
        top: 315px;
        width: 597px;
        height: 399px;
      }

      .one { left: 493px; top: 51px; }
      .two { left: 76px; top: 6px; }
      .three { left: 214px; top: 176px; }
      .four { left: 738px; top: 284px; }

      .trial {
        text-align: right;
        font-size: 10px;
      }

      .trial a {
        color: #00f;
      }

      .check {
        display: flex;
        align-items: center;
        gap: 3px;
        margin-top: 18px;
      }

      .check input {
        width: 13px;
        height: 13px;
        appearance: none;
        border: 1px solid #999;
        background: #f5f5f8;
      }
    `;
  }

  markup() {
    return /*html*/`
      <title-bar></title-bar>
      <menu-bar></menu-bar>
      <main>
        <file-panel></file-panel>
        <div class="center">
          <tool-bars></tool-bars>
          <param-pane></param-pane>
          <div class="gap"></div>
          <sheet-grid></sheet-grid>
        </div>
        <side-strip></side-strip>
        <cell-panel></cell-panel>
      </main>
      <template-menu></template-menu>
      <div class="mark"></div>
      <fr-dialog heading="计算属性">
        <div class="trial"><a href="#">实验性功能</a></div>
        <div class="check"><input type="checkbox" id="cache"><label for="cache">查询缓存</label></div>
      </fr-dialog>
      <step-badge class="one">1</step-badge>
      <step-badge class="two">2</step-badge>
      <step-badge class="three">3</step-badge>
      <step-badge class="four">4</step-badge>
    `;
  }

}

customElements.define('report-designer', ReportDesigner);
</script>
</body>
</html>
